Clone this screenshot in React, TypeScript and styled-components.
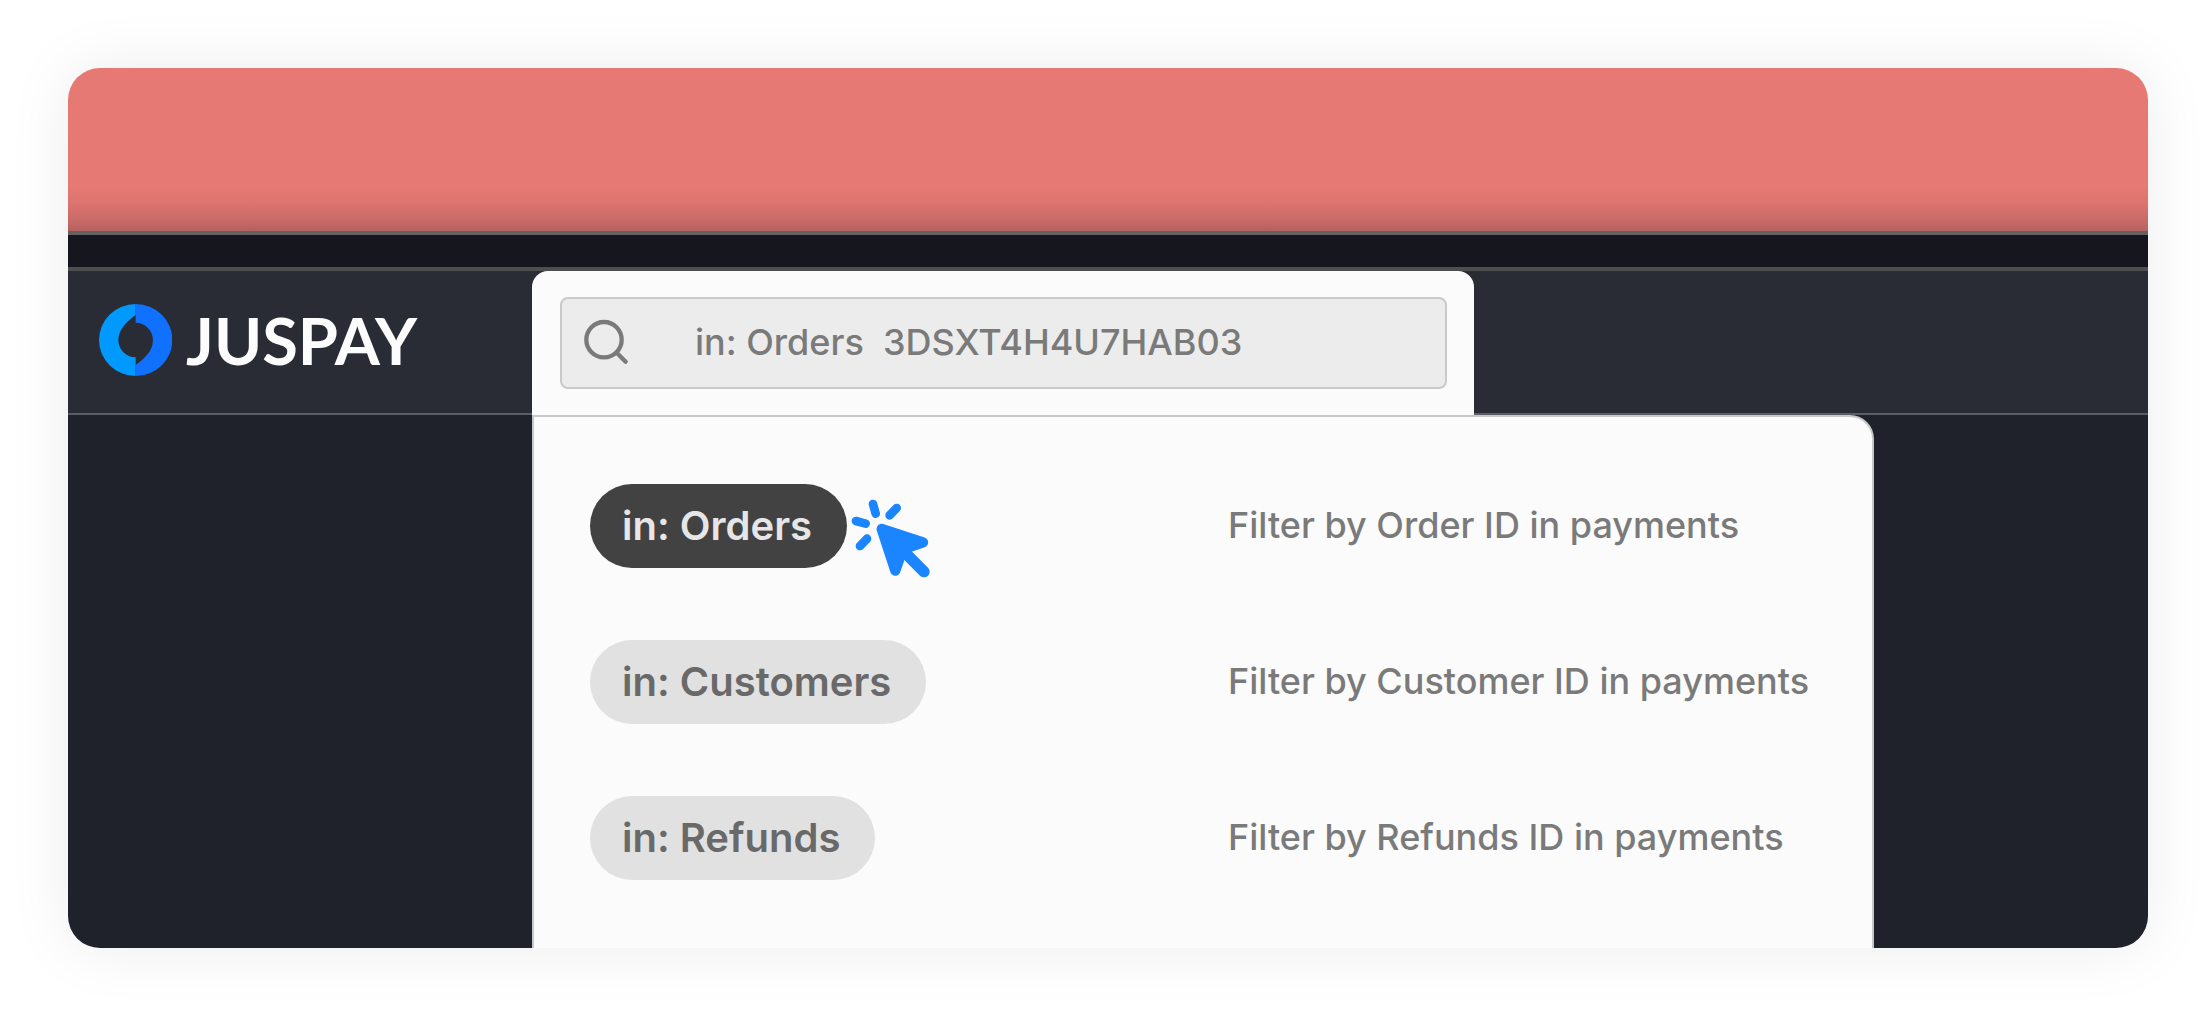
import React, { useState } from "react";
import styled, { createGlobalStyle } from "styled-components";

const GlobalStyle = createGlobalStyle`
  *, *::before, *::after { box-sizing: border-box; }
  body { margin: 0; background: #fff; font-family: Inter, "Liberation Sans", sans-serif; }
  button, input { font: inherit; }
`;

const Page = styled.main`
  padding: 68px 64px 64px 68px;
`;

const Card = styled.section`
  border-radius: 32px;
  overflow: hidden;
`;

const Shadow = styled.div`
  border-radius: 32px;
  box-shadow: 0 0 64px rgba(0, 0, 0, 0.08);
`;

const Banner = styled.div`
  height: 163px;
  background: linear-gradient(to top, #b66260 0, #cc6c69 14px, #df7570 30px, #e67973 46px);
`;

const Strip = styled.div`
  height: 40px;
  background: #16161f;
  border-top: 4px solid #626262;
  border-bottom: 4px solid #4e4e4e;
`;

const Header = styled.header`
  display: flex;
  background: #2a2c35;
  box-shadow: inset 0 -2px #5a5d64;
`;

const Brand = styled.a`
  flex: 0 0 464px;
  display: flex;
  align-items: center;
  gap: 14px;
  padding: 0 0 6px 31px;
  color: #fcfcfc;
  text-decoration: none;
  font: 700 65px/72px Lato, sans-serif;
`;

const SearchTab = styled.form`
  flex: 0 1 942px;
  padding: 26px 27px 26px 28px;
  border-radius: 16px 16px 0 0;
  background: #fbfbfb;
`;

const SearchField = styled.label`
  display: flex;
  align-items: center;
  gap: 65px;
  height: 92px;
  padding: 0 20px;
  border: 2px solid #cacaca;
  border-radius: 8px;
  background: #ececec;
`;

const SearchInput = styled.input`
  flex: 1;
  min-width: 0;
  padding: 0 0 2px;
  border: 0;
  outline: 0;
  background: transparent;
  color: #7a7a7a;
  font-size: 36px;
  font-weight: 500;
  line-height: 44px;
`;

const Body = styled.div`
  padding-left: 464px;
  background: #1f222b;
`;

const Suggestions = styled.ul`
  display: grid;
  gap: 72px;
  max-width: 1342px;
  margin: 0;
  padding: 67px 24px 68px 56px;
  list-style: none;
  background: #fbfbfb;
  border: 2px solid #c8c8c8;
  border-bottom: 0;
  border-radius: 0 24px 0 0;
`;

const Suggestion = styled.li`
  display: grid;
  grid-template-columns: 638px 1fr;
  align-items: center;
`;

const PillSlot = styled.div`
  position: relative;
  justify-self: start;
`;

const Pill = styled.button<{ $active: boolean }>`
  display: block;
  height: 84px;
  padding: 0 35px 0 32px;
  border: 0;
  border-radius: 42px;
  background: ${(p) => (p.$active ? "#424242" : "#e1e1e1")};
  color: ${(p) => (p.$active ? "#e6e6e6" : "#696969")};
  font-size: 40px;
  font-weight: 600;
  line-height: 48px;
  white-space: nowrap;
  cursor: pointer;
`;

const Pointer = styled.svg`
  position: absolute;
  left: calc(100% + 4px);
  top: 15px;
  pointer-events: none;
`;

const Description = styled.span`
  padding-bottom: 2px;
  color: #7a7a7a;
  font-size: 36px;
  font-weight: 500;
  line-height: 44px;
  white-space: nowrap;
`;

const BrandMark = () => (
  <svg width="73" height="72" viewBox="57 72 219 216" aria-hidden="true">
    <path fill="#0099ff" d="M167 72A110 108 0 0 0 167 288V232C138 232 115 208 115 180C115 146 143 123 167 105Z" />
    <path fill="#1071ff" d="M167 72A110 108 0 0 1 167 288V255C191 238 219 214 219 180C219 152 196 128 167 128Z" />
  </svg>
);

const SearchIcon = () => (
  <svg width="48" height="48" viewBox="186 207 144 144" fill="none" stroke="#7a7a7a" strokeWidth="13" strokeLinecap="round" aria-hidden="true">
    <circle cx="252" cy="269" r="53" />
    <path d="M291 309L317 335" />
  </svg>
);

const ClickPointer = () => (
  <Pointer width="80" height="80" viewBox="843 87 240 240" fill="none" stroke="#1a85ff" strokeLinecap="round" strokeLinejoin="round" aria-hidden="true">
    <path strokeWidth="26" d="M909 102L917 131M980 114L959 136M858 153L887 161M891 206L870 228" />
    <path strokeWidth="31" fill="#1a85ff" d="M935 177L1059 217L998 238L976 302Z" />
    <path strokeWidth="34" d="M1000 243L1062 305" />
  </Pointer>
);

const filters = [
  { name: "Orders", description: "Filter by Order ID in payments" },
  { name: "Customers", description: "Filter by Customer ID in payments" },
  { name: "Refunds", description: "Filter by Refunds ID in payments" },
];

export default function App() {
  const [active, setActive] = useState("Orders");
  const [term, setTerm] = useState("in: Orders\u00a0 3DSXT4H4U7HAB03");

  const choose = (name: string) => {
    setActive(name);
    setTerm(`in: ${name}\u00a0 3DSXT4H4U7HAB03`);
  };

  return (
    <>
      <GlobalStyle />
      <Page>
        <Shadow>
          <Card>
            <Banner />
            <Strip />
            <Header>
              <Brand href="#">
                <BrandMark />
                JUSPAY
              </Brand>
              <SearchTab role="search" onSubmit={(e) => e.preventDefault()}>
                <SearchField>
                  <SearchIcon />
                  <SearchInput
                    type="text"
                    aria-label="Search"
                    value={term}
                    onChange={(e) => setTerm(e.target.value)}
                  />
                </SearchField>
              </SearchTab>
            </Header>
            <Body>
              <Suggestions>
                {filters.map(({ name, description }) => (
                  <Suggestion key={name}>
                    <PillSlot>
                      <Pill type="button" $active={name === active} onClick={() => choose(name)}>
                        in: {name}
                      </Pill>
                      {name === active && <ClickPointer />}
                    </PillSlot>
                    <Description>{description}</Description>
                  </Suggestion>
                ))}
              </Suggestions>
            </Body>
          </Card>
        </Shadow>
      </Page>
    </>
  );
}
